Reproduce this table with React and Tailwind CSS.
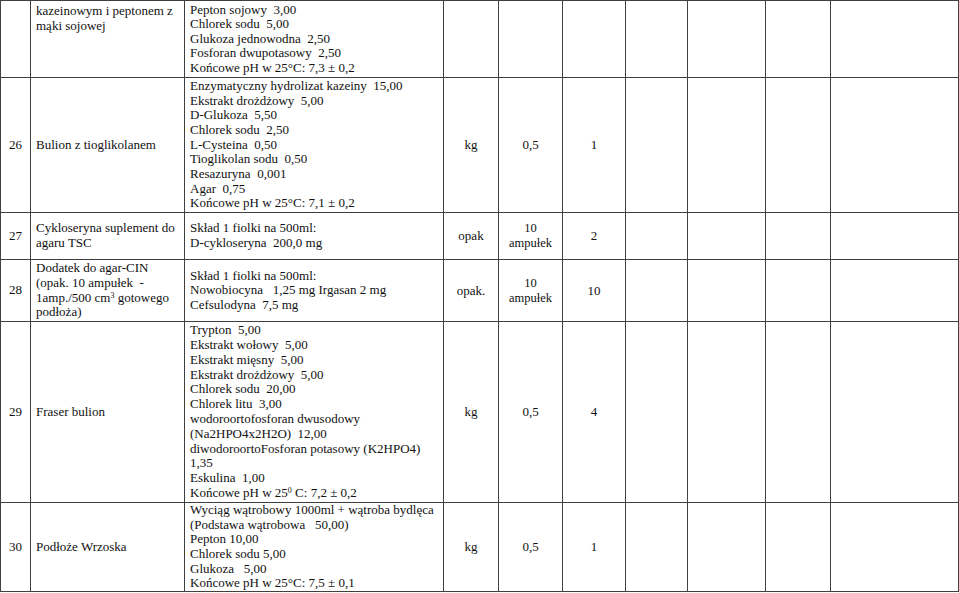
import React from "react";

// column widths in px, left to right
const cols = [30, 154, 259, 55, 64, 63, 62, 78, 65, 128];

const rows = [
  {
    lp: "",
    name: ["kazeinowym i peptonem z", "mąki sojowej"],
    nameTop: true,
    sklad: [
      "Pepton sojowy  3,00",
      "Chlorek sodu  5,00",
      "Glukoza jednowodna  2,50",
      "Fosforan dwupotasowy  2,50",
      <>Końcowe pH w 25°C: 7,3 ± 0,2</>,
    ],
    h: "h-[77px]",
    lead: "leading-[14.6px]",
  },
  {
    lp: "26",
    name: ["Bulion z tioglikolanem"],
    sklad: [
      "Enzymatyczny hydrolizat kazeiny  15,00",
      "Ekstrakt drożdżowy  5,00",
      "D-Glukoza  5,50",
      "Chlorek sodu  2,50",
      "L-Cysteina  0,50",
      "Tioglikolan sodu  0,50",
      "Resazuryna  0,001",
      "Agar  0,75",
      "Końcowe pH w 25°C: 7,1 ± 0,2",
    ],
    jm: "kg",
    op: "0,5",
    il: "1",
    h: "h-[135px]",
    lead: "leading-[14.7px]",
  },
  {
    lp: "27",
    name: ["Cykloseryna suplement do", "agaru TSC"],
    sklad: ["Skład 1 fiolki na 500ml:", "D-cykloseryna  200,0 mg"],
    jm: "opak",
    op: ["10", "ampułek"],
    il: "2",
    h: "h-[47px]",
    lead: "leading-[14.7px]",
  },
  {
    lp: "28",
    name: [
      "Dodatek do agar-CIN",
      "(opak. 10 ampułek  -",
      <>
        1amp./500 cm<sup className="text-[8px]">3</sup> gotowego
      </>,
      "podłoża)",
    ],
    sklad: [
      "Skład 1 fiolki na 500ml:",
      "Nowobiocyna   1,25 mg Irgasan 2 mg",
      "Cefsulodyna  7,5 mg",
    ],
    jm: "opak.",
    op: ["10", "ampułek"],
    il: "10",
    h: "h-[62px]",
    lead: "leading-[14.6px]",
  },
  {
    lp: "29",
    name: ["Fraser bulion"],
    sklad: [
      "Trypton  5,00",
      "Ekstrakt wołowy  5,00",
      "Ekstrakt mięsny  5,00",
      "Ekstrakt drożdżowy  5,00",
      "Chlorek sodu  20,00",
      "Chlorek litu  3,00",
      "wodoroortofosforan dwusodowy",
      "(Na2HPO4x2H2O)  12,00",
      "diwodoroortoFosforan potasowy (K2HPO4)",
      "1,35",
      "Eskulina  1,00",
      <>
        Końcowe pH w 25<sup className="text-[8px]">0</sup> C: 7,2 ± 0,2
      </>,
    ],
    jm: "kg",
    op: "0,5",
    il: "4",
    h: "h-[181px]",
    lead: "leading-[14.8px]",
  },
  {
    lp: "30",
    name: ["Podłoże Wrzoska"],
    sklad: [
      "Wyciąg wątrobowy 1000ml + wątroba bydlęca",
      "(Podstawa wątrobowa   50,00)",
      "Pepton 10,00",
      "Chlorek sodu 5,00",
      "Glukoza   5,00",
      "Końcowe pH w 25°C: 7,5 ± 0,1",
    ],
    jm: "kg",
    op: "0,5",
    il: "1",
    h: "h-[89px]",
    lead: "leading-[14.6px]",
  },
];

const cell = "border border-[#3f3f3f] p-0";

const Lines = ({ items, className }) => (
  <div className={className}>
    {items.map((t, i) => (
      <div key={i} className="whitespace-pre">
        {t}
      </div>
    ))}
  </div>
);

export default function App() {
  return (
    <div
      className="bg-white w-[959px] h-[593px] overflow-hidden text-[#111] text-[13px]"
      style={{ fontFamily: '"Liberation Serif", "Times New Roman", serif' }}
    >
      <table className="table-fixed border-collapse w-[958px]">
        <colgroup>
          {cols.map((w, i) => (
            <col key={i} style={{ width: w }} />
          ))}
        </colgroup>
        <tbody>
          {rows.map((r, i) => (
            <tr key={i} className={r.h}>
              <td className={`${cell} text-center align-middle ${r.lead}`}>{r.lp}</td>
              <td className={`${cell} pl-[5px] ${r.nameTop ? "align-top pt-[3px]" : "align-middle"}`}>
                <Lines items={r.name} className="leading-[14.6px]" />
              </td>
              <td className={`${cell} pl-[5px] align-middle`}>
                <Lines items={r.sklad} className={r.lead} />
              </td>
              <td className={`${cell} text-center align-middle`}>{r.jm}</td>
              <td className={`${cell} text-center align-middle`}>
                {Array.isArray(r.op) ? (
                  <Lines items={r.op} className="text-[12.5px] leading-[15px]" />
                ) : (
                  r.op
                )}
              </td>
              <td className={`${cell} text-center align-middle`}>{r.il}</td>
              <td className={cell}></td>
              <td className={cell}></td>
              <td className={cell}></td>
              <td className={cell}></td>
            </tr>
          ))}
        </tbody>
      </table>
    </div>
  );
}
